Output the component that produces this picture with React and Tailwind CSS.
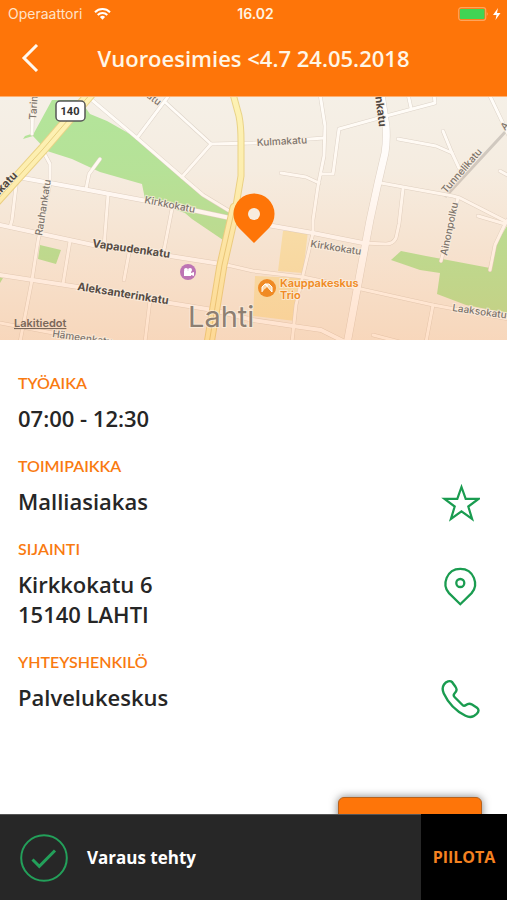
import React from "react";

const roads = [
  "M92 4 L137 42 L182 81 L203 99 L231 116",
  "M137 42 L170 -2",
  "M165 6 L211 48 L182 81",
  "M211 48 L253 47 L324 42",
  "M43 55 L50 68 L50 87 L38 145 L32 184 L20 246",
  "M100 63 L89 78 L86 93",
  "M17 82 L12 124 L10 131",
  "M108 99 L104 151",
  "M172 113 L163 159",
  "M70 145 L63 188",
  "M129 157 L124 184",
  "M150 204 L145 246",
  "M0 227 L53 237 L100 247",
  "M33 -2 L32 38",
  "M320 -2 L325 30 L324 60 L318 90 L313 124 L313 137 L303 179 L296 209 L292 246",
  "M321 78 L333 78 L339 33 L386 20 L435 7 L434 -2",
  "M408 -2 L411 12",
  "M281 77 L306 81 L319 87",
  "M398 43 L436 50 L452 57 L459 72",
  "M443 35 L452 57",
  "M381 87 L453 100 L460 102 L509 127",
  "M403 93 L399 128 L396 142 Q393 148 386 148 L363 147",
  "M489 -2 L509 40",
  "M500 75 L509 80",
  "M458 102 L441 165",
  "M478 120 L505 128 L509 122",
  "M505 128 L495 149 L490 174",
  "M227 169 L253 175 L303 181 L361 193 L433 209 L509 223",
  "M433 209 L426 246",
  "M373 239 L400 246",
];

const wideRoads = [
  "M23 82 L83 93 L147 105 L197 115 L230 122 L273 130 L313 137 L363 147",
  "M0 129 L93 149 L170 160 L227 169",
  "M0 179 L78 191 L170 207 L213 214 L253 224 L293 230 L321 234 L345 246",
];

const mainRoad = "M381 -2 L386 30 Q387 45 385 57 L378 87 L370 124 L361 172 L347 248";
const highway = "M92 -4 L43 53 L-4 105";
const avenueTop = "M233 -2 L239 20 Q241 30 241 45 L241 80 L235 116";
const avenueBottom = "M235 112 L222 169 L209 248";

function MapLabel({ x, y, rotate = 0, size = 10, weight = 500, fill = "#7d746c", anchor = "start", underline = false, children }) {
  return (
    <text
      x={x}
      y={y}
      transform={`rotate(${rotate} ${x} ${y})`}
      fontSize={size}
      fontWeight={weight}
      fill={fill}
      textAnchor={anchor}
      textDecoration={underline ? "underline" : undefined}
      stroke="#fbf0e2"
      strokeWidth="2"
      strokeOpacity={underline ? 0 : 0.7}
      paintOrder="stroke"
    >
      {children}
    </text>
  );
}

function LocationMap() {
  return (
    <svg
      className="block h-[244px] w-full font-['Inter',sans-serif]"
      viewBox="0 0 507 244"
      preserveAspectRatio="xMidYMid slice"
      role="img"
      aria-label="Lahti"
    >
      <defs>
        <linearGradient id="warm" x1="0" y1="0" x2="0" y2="1">
          <stop offset="0" stopColor="#ff9040" stopOpacity="0" />
          <stop offset="0.3" stopColor="#ff9040" stopOpacity="0.04" />
          <stop offset="1" stopColor="#ff9040" stopOpacity="0.26" />
        </linearGradient>
      </defs>
      <rect width="507" height="244" fill="#f5f0e7" />
      <g fill="#b3e59b">
        <path d="M52 4 L80 4 L90 18 L107 25 L137 42 L182 81 L203 99 L230 115 L228 125 L223 144 L192 123 L185 117 L145 103 L142 88 L100 76 L72 63 L47 55 L33 40 L23 43 L25 40 L34 37 Z" />
        <path d="M401 155 L426 160 L453 165 L490 172 L495 150 L507 130 L507 217 L466 209 L437 198 L440 177 L420 174 L391 164 Z" />
        <path d="M40 149 L61 154 L56 168 L38 163 Z M0 181 L3 182 L0 187 Z" />
      </g>
      <g fill="#f7e6b4">
        <path d="M283 135 L308 135 L303 177 L278 175 Z" />
        <path d="M255 180 L301 182 L295 225 L253 220 Z" />
      </g>
      <g fill="none" strokeLinejoin="round" strokeLinecap="round">
        <path d="M446 100 L507 34" stroke="#cfcac3" strokeWidth="3" />
        <g stroke="#ddd4ca" strokeWidth="4">
          {roads.map((d) => <path key={d} d={d} />)}
        </g>
        <g stroke="#ddd4ca" strokeWidth="5">
          {wideRoads.map((d) => <path key={d} d={d} />)}
        </g>
        <path d={mainRoad} stroke="#ddd4ca" strokeWidth="8" />
        <g stroke="#fffdf9" strokeWidth="3">
          {roads.map((d) => <path key={d} d={d} />)}
        </g>
        <g stroke="#ffffff" strokeWidth="4">
          {wideRoads.map((d) => <path key={d} d={d} />)}
        </g>
        <path d={mainRoad} stroke="#ffffff" strokeWidth="7" />
        <g stroke="#e9d488">
          <path d={highway} strokeWidth="11" />
          <path d={avenueTop} strokeWidth="7" />
          <path d={avenueBottom} strokeWidth="11" />
        </g>
        <g stroke="#fdf2b4">
          <path d={highway} strokeWidth="9" />
          <path d={avenueTop} strokeWidth="5" />
          <path d={avenueBottom} strokeWidth="9" />
        </g>
        <path d={highway} stroke="#e6cf80" strokeWidth="1" />
        <path d={avenueBottom} stroke="#e6cf80" strokeWidth="1" />
      </g>
      <rect width="507" height="244" fill="url(#warm)" />

      <MapLabel x={257} y={50} rotate={-3}>Kulmakatu</MapLabel>
      <MapLabel x={144} y={107} rotate={11}>Kirkkokatu</MapLabel>
      <MapLabel x={310} y={151} rotate={9}>Kirkkokatu</MapLabel>
      <MapLabel x={92} y={151} rotate={8} size={11} weight={700} fill="#574c44">Vapaudenkatu</MapLabel>
      <MapLabel x={77} y={194} rotate={9} size={11} weight={700} fill="#574c44">Aleksanterinkatu</MapLabel>
      <MapLabel x={42} y={140} rotate={-81}>Rauhankatu</MapLabel>
      <MapLabel x={36} y={24} rotate={-86}>Tarin</MapLabel>
      <MapLabel x={18} y={80} rotate={-46} size={11} weight={700} fill="#4f4640" anchor="end">nkatu</MapLabel>
      <MapLabel x={158} y={10} rotate={38} anchor="end">atu</MapLabel>
      <MapLabel x={379} y={31} rotate={83} size={11} weight={700} fill="#4f4640" anchor="end">nkatu</MapLabel>
      <MapLabel x={446} y={98} rotate={-49}>Tunnelikatu</MapLabel>
      <MapLabel x={505} y={35} rotate={-49}>A</MapLabel>
      <MapLabel x={447} y={160} rotate={-78}>Ainonpolku</MapLabel>
      <MapLabel x={452} y={215} rotate={8}>Laaksokatu</MapLabel>
      <MapLabel x={52} y={241} rotate={8}>Hämeenkatu</MapLabel>
      <MapLabel x={14} y={231} size={11} weight={600} fill="#7a685a" underline>Lakitiedot</MapLabel>
      <MapLabel x={188} y={231} size={29} weight={400} fill="#8d7f72">Lahti</MapLabel>
      <MapLabel x={280} y={191} size={11} weight={600} fill="#f08a24">Kauppakeskus</MapLabel>
      <MapLabel x={280} y={203} size={11} weight={600} fill="#f08a24">Trio</MapLabel>

      <circle cx="188" cy="176" r="8" fill="#bd74b4" />
      <g fill="#fff">
        <circle cx="186" cy="174" r="2" />
        <circle cx="190" cy="174" r="2" />
        <path d="M184 175 h7 v5 h-7 Z M191 177 l3 -1 v4 l-3 -1 Z" />
      </g>
      <circle cx="267" cy="192" r="9" fill="#f08a24" />
      <path d="M262 196 V191 L265 188 L268 190 M265 188 H269 L272 191 V196 Z" fill="#fbd9ae" stroke="#fff" strokeWidth="1" />
      <path d="M265 193 v2 M268 193 v2" stroke="#f08a24" strokeWidth="1" />

      <rect x="56" y="5" width="29" height="20" rx="4" fill="#fff" stroke="#555" strokeWidth="1.5" />
      <text x="70" y="19" fontSize="11" fontWeight="700" fill="#333" textAnchor="middle" className="font-['Roboto',sans-serif]">140</text>

      <path d="M254 147 L239 132 A20.500 20.500 0 1 1 269 132 Z" fill="#fe7508" />
      <circle cx="254" cy="118" r="6" fill="#f8ecdf" />

      <rect width="507" height="1" fill="#ffb070" />
    </svg>
  );
}

function StatusBar() {
  return (
    <div className="grid h-7 grid-cols-3 items-center pl-2 pr-1 font-['Inter',sans-serif] text-sm">
      <div className="flex items-center gap-3">
        <span className="text-[#ffe3c8]">Operaattori</span>
        <svg className="h-3 w-[17px]" viewBox="0 0 17 12" fill="none" stroke="#fff" strokeWidth="2" aria-hidden="true">
          <path d="M1 4.200 A10.600 10.600 0 0 1 16 4.200" />
          <path d="M3.700 7 A6.800 6.800 0 0 1 13.300 7" />
          <path d="M8.500 11.800 L5.900 9.100 A3.700 3.700 0 0 1 11.100 9.100 Z" fill="#fff" stroke="none" />
        </svg>
      </div>
      <span className="text-center font-semibold text-[#fff3e2]">16.02</span>
      <svg className="h-[14px] w-[45px] justify-self-end" viewBox="0 0 45 14" aria-hidden="true">
        <rect x="0.700" y="0.700" width="27" height="12.600" rx="2.500" fill="none" stroke="#ffa45c" strokeWidth="1.200" />
        <rect x="1.900" y="1.900" width="24.600" height="10.200" rx="1" fill="#41d454" />
        <path d="M28.800 5 q2 2 0 4 Z" fill="#ffa45c" />
        <path d="M40 1 L35 8 H38.500 L37.500 13 L42.500 6 H39 Z" fill="#fff" />
      </svg>
    </div>
  );
}

function StarIcon() {
  return (
    <svg className="size-10" viewBox="0 0 40 40" fill="none" stroke="#1a9c50" strokeWidth="2.200" aria-hidden="true">
      <path d="M21.500 4 L25.700 15.900 H38.500 L28.300 23.500 L32.100 36 L21.500 28.400 L10.900 36 L14.700 23.500 L4.500 15.900 H17.300 Z" />
    </svg>
  );
}

function PinIcon() {
  return (
    <svg className="size-10" viewBox="0 0 40 40" fill="none" stroke="#1a9c50" strokeWidth="2.300" aria-hidden="true">
      <path d="M20.300 38.200 L9 27.100 C1.500 19 6.500 2.800 20.300 2.800 C34.100 2.800 39 19 31.600 27.100 Z" />
      <circle cx="20.300" cy="17" r="4" />
    </svg>
  );
}

function PhoneIcon() {
  return (
    <svg className="size-10" viewBox="0 0 40 40" fill="none" stroke="#1a9c50" strokeWidth="2.400" strokeLinejoin="round" aria-hidden="true">
      <path d="M4 5.500 C6 2.500 10 0.900 12.200 3.200 L15.300 7.500 C17 10.300 17.300 11.500 14.500 14.500 C13.500 15.700 13.500 17 14.500 18 L22.500 26 C23.500 27 24.800 27 26 26 C28 24.300 30 24.300 32 25.500 L37 28.800 C39.200 30.500 38.800 32.500 36.800 34.800 C33.500 38.300 29.500 38.800 25.500 36.800 C16 32 8 23.500 3.800 14.500 C2.200 11 2.300 8 4 5.500 Z" />
    </svg>
  );
}

function Detail({ label, icon, action, children }) {
  return (
    <div>
      <dt className="font-['Lato',sans-serif] text-base leading-5 font-semibold text-[#f97a10]">{label}</dt>
      <dd className="mt-[10px] flex items-start justify-between text-[22px] leading-[30px] font-semibold text-[#262626]">
        <div>{children}</div>
        {icon && (
          <button type="button" aria-label={action} className="-mt-[3px] mr-[2px] -mb-[7px] size-10">
            {icon}
          </button>
        )}
      </dd>
    </div>
  );
}

export default function App() {
  return (
    <div className="flex min-h-screen flex-col bg-white font-['Open_Sans',sans-serif]">
      <header className="h-24 bg-[#fe7509]">
        <StatusBar />
        <div className="grid h-[60px] grid-cols-[60px_1fr_60px] items-center">
          <button type="button" aria-label="Takaisin" className="flex size-[60px] items-center justify-center">
            <svg className="h-7 w-5" viewBox="0 0 20 28" fill="none" stroke="#fff8ee" strokeWidth="3" aria-hidden="true">
              <path d="M17 1 L4 14 L17 27" />
            </svg>
          </button>
          <h1 className="text-center text-[22px] leading-[30px] font-semibold whitespace-nowrap text-[#fff6e6]">
            Vuoroesimies &lt;4.7 24.05.2018
          </h1>
        </div>
      </header>

      <LocationMap />

      <main className="flex flex-col pt-[33px] pr-[25px] pl-[18px]">
        <dl className="flex flex-col gap-[23px]">
          <Detail label="TYÖAIKA">07:00 - 12:30</Detail>
          <Detail label="TOIMIPAIKKA" icon={<StarIcon />} action="Suosikki">Malliasiakas</Detail>
          <Detail label="SIJAINTI" icon={<PinIcon />} action="Kartta">
            <p>Kirkkokatu 6</p>
            <p>15140 LAHTI</p>
          </Detail>
          <Detail label="YHTEYSHENKILÖ" icon={<PhoneIcon />} action="Soita">Palvelukeskus</Detail>
        </dl>
        <button
          type="button"
          aria-label="Varaus"
          className="mt-[85px] h-12 w-36 self-end rounded-md border border-[#b8621c] bg-[#fe7509] shadow-[0_0_9px_rgba(0,0,0,0.5)]"
        />
      </main>

      <div role="status" className="fixed inset-x-0 bottom-0 flex h-[86px] items-stretch bg-[#272727]">
        <div className="flex flex-1 items-center gap-[19px] border-t border-[#555] pl-5">
          <svg className="size-12" viewBox="0 0 48 48" fill="none" stroke="#23a05a" aria-hidden="true">
            <circle cx="24" cy="24" r="22.800" strokeWidth="2" />
            <path d="M12.500 25.500 L19.300 32.300 L35 16.500" strokeWidth="3" />
          </svg>
          <p className="text-[17px] font-bold text-white">Varaus tehty</p>
        </div>
        <button type="button" className="w-[86px] bg-black text-center text-base font-bold text-[#f58220]">
          PIILOTA
        </button>
      </div>
    </div>
  );
}
